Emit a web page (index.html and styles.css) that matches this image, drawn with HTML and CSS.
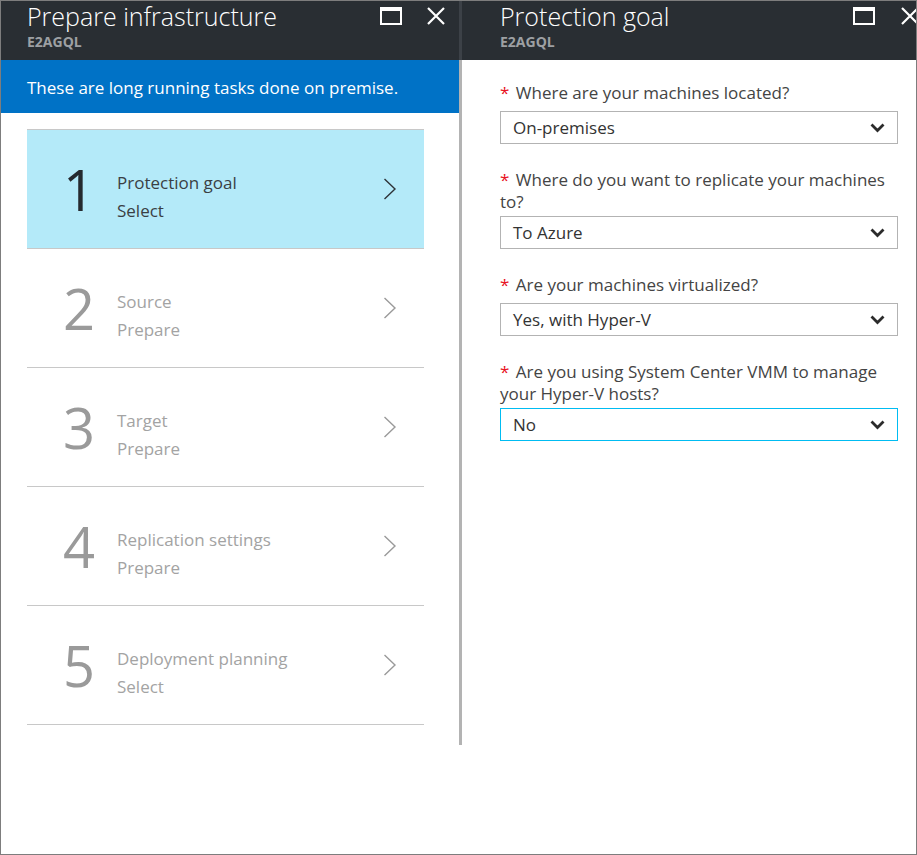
FILE: index.html
```html
<!DOCTYPE html>
<html>
<head>
<meta charset="utf-8">
<link rel="stylesheet" href="styles.css">
</head>
<body>
<div class="frame">
  <section class="blade blade-left">
    <header class="blade-header">
      <div class="titles">
        <h1 class="title">Prepare infrastructure</h1>
        <div class="subtitle">E2AGQL</div>
      </div>
      <div class="actions">
        <svg class="ico-max" width="22" height="18" viewBox="0 0 22 18"><path fill="#fff" fill-rule="evenodd" d="M0 0H22V18H0Z M2 4V16H20V4Z"/></svg>
        <svg class="ico-close" width="18" height="18" viewBox="0 0 18 18"><path d="M1 1L17 17M17 1L1 17" stroke="#fff" stroke-width="2.2" fill="none"/></svg>
      </div>
    </header>
    <div class="notice">These are long running tasks done on premise.</div>
    <ul class="steps">
      <li class="step active">
        <span class="num">1</span>
        <span class="txt"><span class="name">Protection goal</span><span class="state">Select</span></span>
        <svg class="chev" width="14" height="22" viewBox="0 0 14 22"><path d="M1.5 1L12 11L1.5 21" fill="none" stroke="currentColor" stroke-width="1.4"/></svg>
      </li>
      <li class="step">
        <span class="num">2</span>
        <span class="txt"><span class="name">Source</span><span class="state">Prepare</span></span>
        <svg class="chev" width="14" height="22" viewBox="0 0 14 22"><path d="M1.5 1L12 11L1.5 21" fill="none" stroke="currentColor" stroke-width="1.4"/></svg>
      </li>
      <li class="step">
        <span class="num">3</span>
        <span class="txt"><span class="name">Target</span><span class="state">Prepare</span></span>
        <svg class="chev" width="14" height="22" viewBox="0 0 14 22"><path d="M1.5 1L12 11L1.5 21" fill="none" stroke="currentColor" stroke-width="1.4"/></svg>
      </li>
      <li class="step">
        <span class="num">4</span>
        <span class="txt"><span class="name">Replication settings</span><span class="state">Prepare</span></span>
        <svg class="chev" width="14" height="22" viewBox="0 0 14 22"><path d="M1.5 1L12 11L1.5 21" fill="none" stroke="currentColor" stroke-width="1.4"/></svg>
      </li>
      <li class="step">
        <span class="num">5</span>
        <span class="txt"><span class="name">Deployment planning</span><span class="state">Select</span></span>
        <svg class="chev" width="14" height="22" viewBox="0 0 14 22"><path d="M1.5 1L12 11L1.5 21" fill="none" stroke="currentColor" stroke-width="1.4"/></svg>
      </li>
    </ul>
  </section>
  <div class="divider"><div class="divider-top"></div><div class="divider-bottom"></div></div>
  <section class="blade blade-right">
    <header class="blade-header">
      <div class="titles">
        <h1 class="title">Protection goal</h1>
        <div class="subtitle">E2AGQL</div>
      </div>
      <div class="actions">
        <svg class="ico-max" width="22" height="18" viewBox="0 0 22 18"><path fill="#fff" fill-rule="evenodd" d="M0 0H22V18H0Z M2 4V16H20V4Z"/></svg>
        <svg class="ico-close" width="18" height="18" viewBox="0 0 18 18"><path d="M1 1L17 17M17 1L1 17" stroke="#fff" stroke-width="2.2" fill="none"/></svg>
      </div>
    </header>
    <form class="form">
      <div class="field">
        <label class="label"><span class="req">*</span> Where are your machines located?</label>
        <div class="select"><span>On-premises</span><svg width="15" height="10" viewBox="0 0 15 10"><path d="M1.5 1.5L7.5 7.5L13.5 1.5" fill="none" stroke="#2b2b2b" stroke-width="2.8"/></svg></div>
      </div>
      <div class="field">
        <label class="label label-wrap"><span class="req">*</span> Where do you want to replicate your machines to?</label>
        <div class="select"><span>To Azure</span><svg width="15" height="10" viewBox="0 0 15 10"><path d="M1.5 1.5L7.5 7.5L13.5 1.5" fill="none" stroke="#2b2b2b" stroke-width="2.8"/></svg></div>
      </div>
      <div class="field">
        <label class="label"><span class="req">*</span> Are your machines virtualized?</label>
        <div class="select"><span>Yes, with Hyper-V</span><svg width="15" height="10" viewBox="0 0 15 10"><path d="M1.5 1.5L7.5 7.5L13.5 1.5" fill="none" stroke="#2b2b2b" stroke-width="2.8"/></svg></div>
      </div>
      <div class="field">
        <label class="label label-wrap"><span class="req">*</span> Are you using System Center VMM to manage your Hyper-V hosts?</label>
        <div class="select focused"><span>No</span><svg width="15" height="10" viewBox="0 0 15 10"><path d="M1.5 1.5L7.5 7.5L13.5 1.5" fill="none" stroke="#2b2b2b" stroke-width="2.8"/></svg></div>
      </div>
    </form>
  </section>
</div>
</body>
</html>
```

FILE: styles.css
```css
* { box-sizing: border-box; }
html, body { margin: 0; padding: 0; background: #fff; }
body { font-family: "Open Sans", "Noto Sans", sans-serif; }

.frame {
  width: 917px;
  height: 855px;
  border: 1px solid #7d7d7d;
  display: flex;
  align-items: flex-start;
  overflow: hidden;
}

.blade { display: flex; flex-direction: column; overflow: hidden; }
.blade-left { width: 458px; }
.blade-right { flex: 1; min-width: 0; }

.blade-header {
  height: 59px;
  background: #292e33;
  display: flex;
  justify-content: space-between;
  align-items: flex-start;
}
.blade-left .blade-header { padding-left: 26px; padding-right: 14px; }
.blade-right .blade-header { padding-left: 38px; padding-right: 0; }

.titles { display: flex; flex-direction: column; }
.title {
  margin: -2px 0 0 0;
  font-size: 25px;
  font-weight: 300;
  line-height: 34px;
  color: #fff;
}
.subtitle {
  margin-top: 1px;
  font-size: 14px;
  font-weight: 700;
  line-height: 16px;
  color: #9da0a3;
}

.actions { display: flex; gap: 25px; padding-top: 6px; }
.blade-right .actions { margin-right: -3px; gap: 26px; }

.notice {
  height: 53px;
  background: #0072c6;
  color: #fff;
  font-size: 17px;
  line-height: 53px;
  padding: 1px 0 0 26px;
}

.steps {
  list-style: none;
  margin: 0;
  padding: 16px 35px 0 26px;
}
.step {
  height: 119px;
  border-bottom: 1px solid #c8c8c8;
  display: flex;
  align-items: flex-start;
  color: #a3a3a3;
}
.step:first-child { border-top: 1px solid #c8c8c8; height: 120px; }
.step.active { background: #b4eaf9; color: #3a3f44; }

.num {
  width: 90px;
  padding-left: 36px;
  margin-top: 31px;
  font-size: 56px;
  font-weight: 400;
  line-height: 56px;
  color: #9a9a9a;
}
.step.active .num { color: #252a2f; }

.txt {
  display: flex;
  flex-direction: column;
  margin-top: 39px;
  font-size: 17px;
  line-height: 28px;
  flex: 1;
}

.chev {
  align-self: center;
  margin-right: 27px;
  color: #9a9a9a;
}
.step.active .chev { color: #2e3338; }

.divider { width: 3px; height: 744px; display: flex; flex-direction: column; }
.divider-top { height: 59px; background: #3c4147; }
.divider-bottom { flex: 1; background: #b3b3b3; }

.form { padding: 22px 18px 0 38px; }
.field { margin-bottom: 25px; }
.label {
  display: block;
  font-size: 17px;
  line-height: 22px;
  color: #444;
  margin-bottom: 7px;
}
.label-wrap { margin-bottom: 3px; }
.req { color: #e81123; margin-right: 2px; }

.select {
  height: 33px;
  border: 1px solid #b3b3b3;
  display: flex;
  align-items: center;
  justify-content: space-between;
  padding: 0 12px 0 12px;
  font-size: 17px;
  color: #333;
}
.select.focused { border-color: #00bcf2; }
```
